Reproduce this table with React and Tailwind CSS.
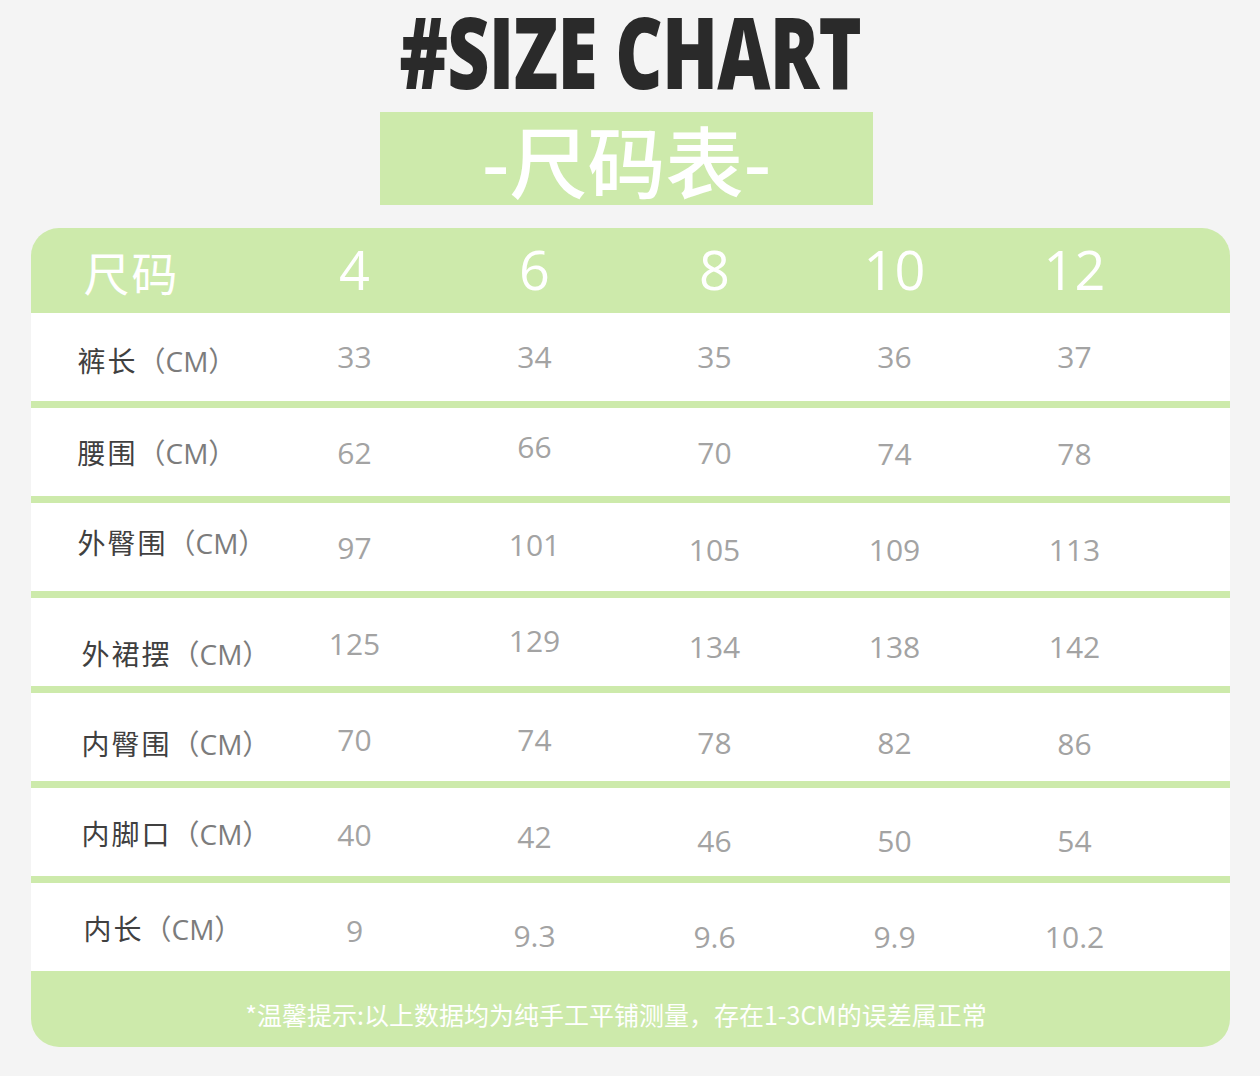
import React from 'react';

const SIZES = ['4', '6', '8', '10', '12'];

// 每行：名称、数值、标签左移/上下偏移、数值各自偏移（原图本身排版有些参差）
const ROWS = [
  { name: '裤长', vals: ['33', '34', '35', '36', '37'], lab: 'pl-[47px] translate-y-[3px]', offs: ['', '', '', '', ''] },
  { name: '腰围', vals: ['62', '66', '70', '74', '78'], lab: 'pl-[47px]', offs: ['translate-y-[1px]', '-translate-y-[5px]', 'translate-y-[1px]', 'translate-y-[2px]', 'translate-y-[2px]'] },
  { name: '外臀围', vals: ['97', '101', '105', '109', '113'], lab: 'pl-[47px] -translate-y-[5px]', offs: ['translate-y-[1px]', '-translate-y-[2px]', 'translate-y-[3px]', 'translate-y-[3px]', 'translate-y-[3px]'] },
  { name: '外裙摆', vals: ['125', '129', '134', '138', '142'], lab: 'pl-[51px] translate-y-[11px]', offs: ['translate-y-[2px]', '-translate-y-[1px]', 'translate-y-[5px]', 'translate-y-[5px]', 'translate-y-[5px]'] },
  { name: '内臀围', vals: ['70', '74', '78', '82', '86'], lab: 'pl-[51px] translate-y-[6px]', offs: ['translate-y-[3px]', 'translate-y-[3px]', 'translate-y-[6px]', 'translate-y-[6px]', 'translate-y-[7px]'] },
  { name: '内脚口', vals: ['40', '42', '46', '50', '54'], lab: 'pl-[51px] translate-y-[1px]', offs: ['translate-y-[3px]', 'translate-y-[5px]', 'translate-y-[9px]', 'translate-y-[9px]', 'translate-y-[9px]'] },
  { name: '内长', vals: ['9', '9.3', '9.6', '9.9', '10.2'], lab: 'pl-[53px] translate-y-[1px]', offs: ['translate-y-[4px]', 'translate-y-[9px]', 'translate-y-[10px]', 'translate-y-[10px]', 'translate-y-[10px]'] },
];

const CJK = "font-['Noto_Sans_CJK_SC',sans-serif]";
const NUM = "font-['Open_Sans','Noto_Sans_CJK_SC',sans-serif]";
const GRID = 'grid grid-cols-[234px_repeat(5,180px)_1fr]';

export default function App() {
  return (
    <div className="w-[1260px] h-[1076px] bg-[#f4f4f4] flex flex-col items-center">
      {/* 标题：窄体粗黑，用横向压缩模拟 */}
      <div className="h-[100px] mb-[12px] flex items-center justify-center">
        <h1 className="font-['Open_Sans','DejaVu_Sans',sans-serif] font-extrabold text-[100px] leading-none text-[#2a2a2a] tracking-[-1px] scale-x-[0.732] scale-y-[1.0]">
          #SIZE CHART
        </h1>
      </div>
      <div className={`w-[493px] h-[93px] mr-[7px] bg-[#cdeaab] flex items-center justify-center text-white text-[78px] font-medium leading-none ${CJK}`}>
        -尺码表-
      </div>

      {/* 尺码表 */}
      <div className="mt-[23px] w-[1199px] rounded-[28px] overflow-hidden bg-[#cdeaab] flex flex-col">
        <div className={`${GRID} h-[85px] items-center text-white`}>
          <div className={`pl-[53px] text-[46px] leading-none tracking-[2px] ${CJK}`}>尺码</div>
          {SIZES.map((s) => (
            <div key={s} className={`text-center text-[54px] leading-none -translate-y-[2px] ${NUM}`}>{s}</div>
          ))}
          <div />
        </div>

        <div className="flex flex-col gap-[7px]">
          {ROWS.map((r) => (
            <div key={r.name} className={`${GRID} h-[88px] items-center bg-white`}>
              <div className={`whitespace-nowrap text-[28px] leading-none ${r.lab}`}>
                <span className={`text-[#404040] tracking-[2px] ${CJK}`}>{r.name}</span>
                <span className={`text-[#7c7c7c] ${NUM}`}>（CM）</span>
              </div>
              {r.vals.map((v, i) => (
                <div key={i} className={`text-center text-[30px] leading-none text-[#a3a3a3] ${NUM} ${r.offs[i]}`}>
                  {v}
                </div>
              ))}
              <div />
            </div>
          ))}
        </div>

        <div className={`h-[76px] flex items-center justify-center pt-[10px] pr-[28px] text-white text-[25px] leading-none ${CJK}`}>
          *温馨提示:以上数据均为纯手工平铺测量，存在1-3CM的误差属正常
        </div>
      </div>
    </div>
  );
}
